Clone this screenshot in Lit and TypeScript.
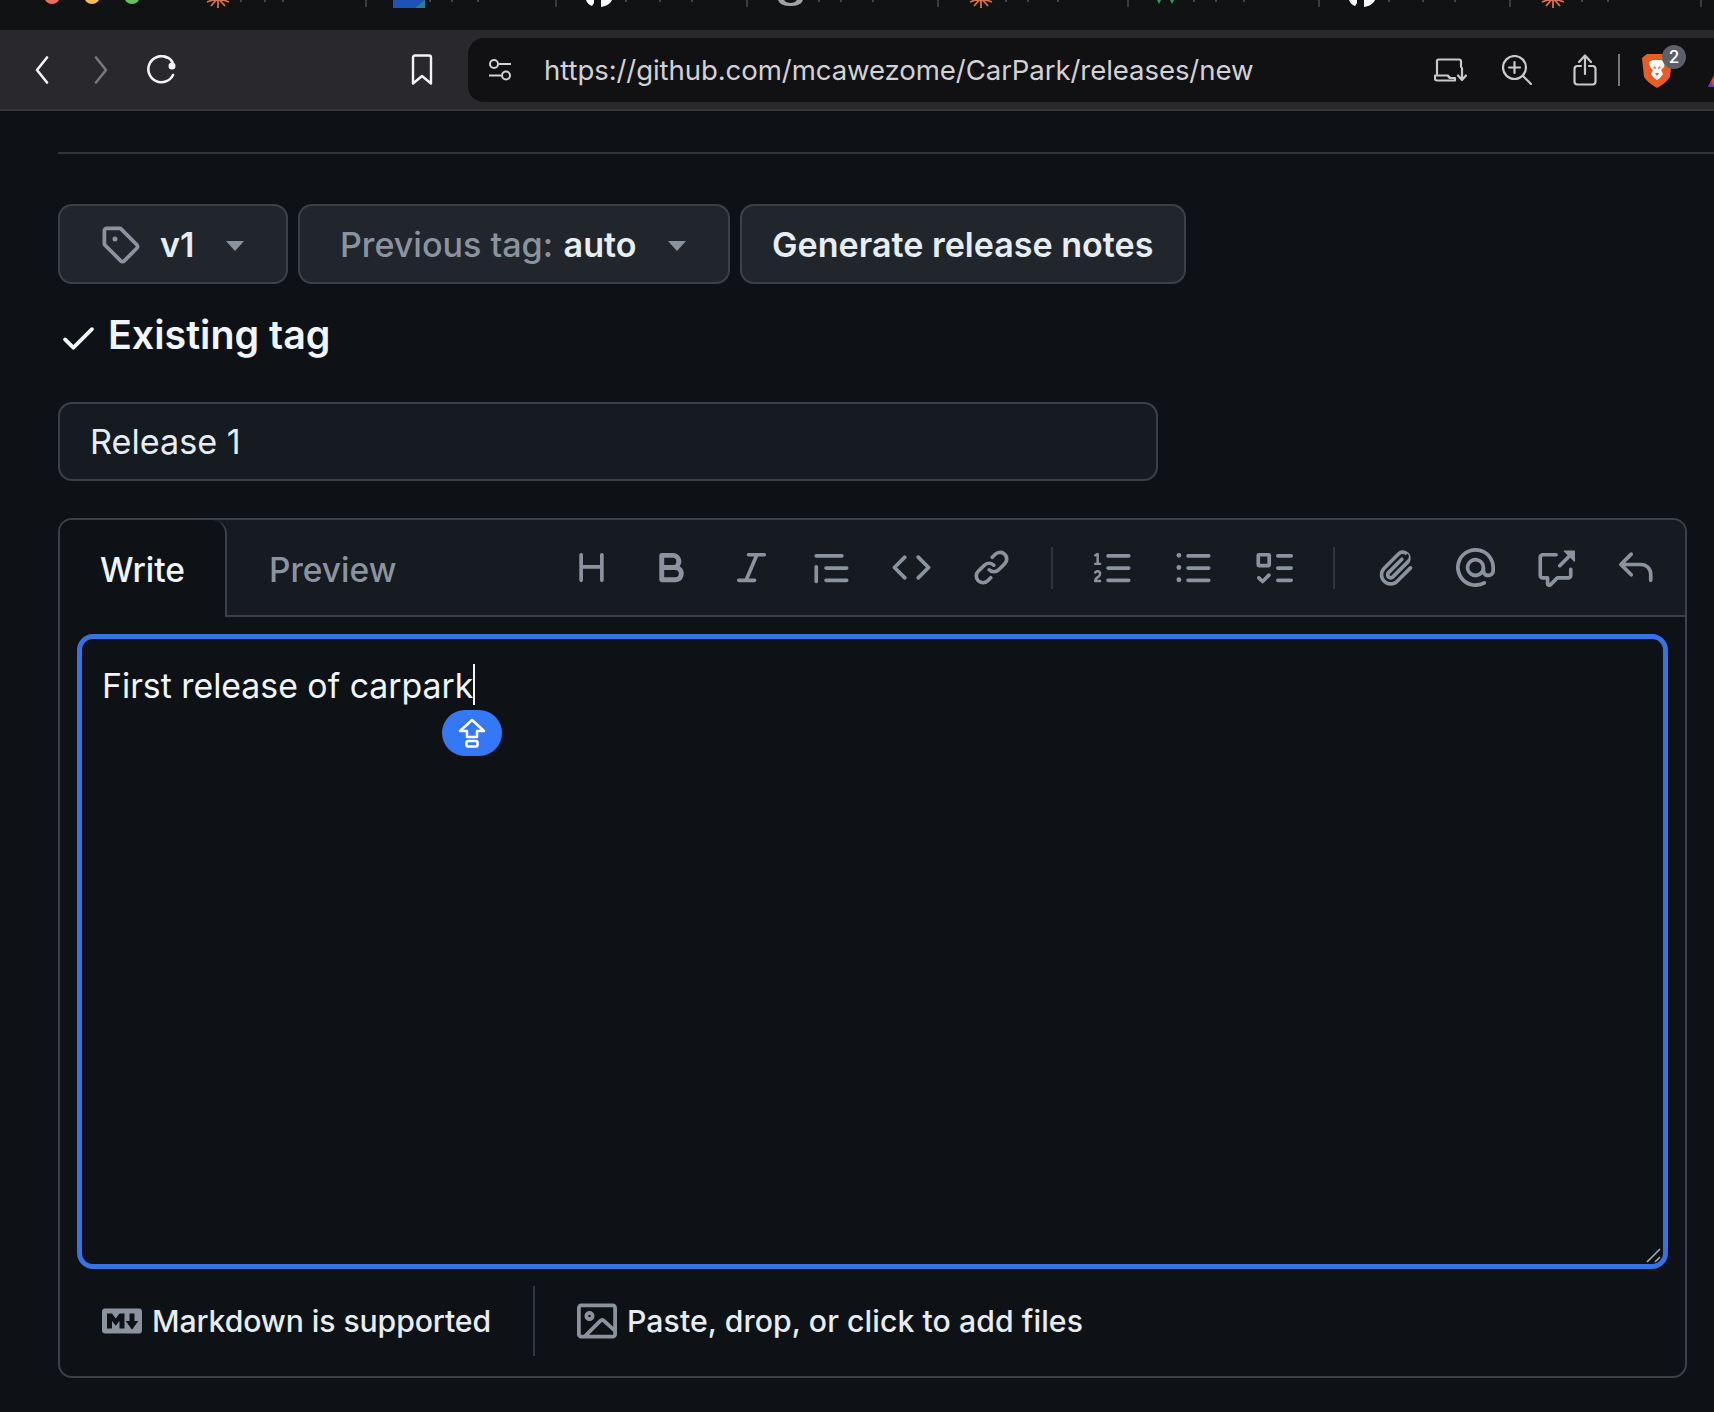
import {html, css, svg, LitElement} from 'lit';
import {customElement} from 'lit/decorators.js';

// octicons, 16 unit grid
const ICONS: Record<string, string> = {
    heading: "M3.75 2a.75.75 0 0 1 .75.75V7h7V2.75a.75.75 0 0 1 1.5 0v10.5a.75.75 0 0 1-1.5 0V8.5h-7v4.75a.75.75 0 0 1-1.5 0V2.75A.75.75 0 0 1 3.75 2Z",
    bold: "M4 2h4.5a3.501 3.501 0 0 1 2.852 5.53A3.499 3.499 0 0 1 9.5 14H4a1 1 0 0 1-1-1V3a1 1 0 0 1 1-1Zm1 7v3h4.5a1.5 1.5 0 0 0 0-3Zm3.5-2a1.5 1.5 0 0 0 0-3H5v3Z",
    italic: "M6 2.75A.75.75 0 0 1 6.75 2h6.5a.75.75 0 0 1 0 1.5h-2.505l-3.858 9H9.25a.75.75 0 0 1 0 1.5h-6.5a.75.75 0 0 1 0-1.5h2.505l3.858-9H6.75A.75.75 0 0 1 6 2.75Z",
    quote: "M1.75 2.5h10.5a.75.75 0 0 1 0 1.5H1.75a.75.75 0 0 1 0-1.5Zm4 5h8.5a.75.75 0 0 1 0 1.5h-8.5a.75.75 0 0 1 0-1.5Zm0 5h8.5a.75.75 0 0 1 0 1.5h-8.5a.75.75 0 0 1 0-1.5ZM2.5 7.75v6a.75.75 0 0 1-1.5 0v-6a.75.75 0 0 1 1.5 0Z",
    code: "m11.28 3.22 4.25 4.25a.75.75 0 0 1 0 1.06l-4.25 4.25a.749.749 0 0 1-1.275-.326.749.749 0 0 1 .215-.734L13.94 8l-3.72-3.72a.749.749 0 0 1 .326-1.275.749.749 0 0 1 .734.215Zm-6.56 0a.751.751 0 0 1 1.042.018.751.751 0 0 1 .018 1.042L2.06 8l3.72 3.72a.749.749 0 0 1-.326 1.275.749.749 0 0 1-.734-.215L.47 8.53a.75.75 0 0 1 0-1.06Z",
    link: "m7.775 3.275 1.25-1.25a3.5 3.5 0 1 1 4.95 4.95l-2.5 2.5a3.5 3.5 0 0 1-4.95 0 .751.751 0 0 1 .018-1.042.751.751 0 0 1 1.042-.018 1.998 1.998 0 0 0 2.83 0l2.5-2.5a2.002 2.002 0 0 0-2.83-2.83l-1.25 1.25a.751.751 0 0 1-1.042-.018.751.751 0 0 1-.018-1.042Zm-4.69 9.64a1.998 1.998 0 0 0 2.83 0l1.25-1.25a.751.751 0 0 1 1.042.018.751.751 0 0 1 .018 1.042l-1.25 1.25a3.5 3.5 0 1 1-4.95-4.95l2.5-2.5a3.5 3.5 0 0 1 4.95 0 .751.751 0 0 1-.018 1.042.751.751 0 0 1-1.042.018 1.998 1.998 0 0 0-2.83 0l-2.5 2.5a1.998 1.998 0 0 0 0 2.83Z",
    ordered: "M5 3.25a.75.75 0 0 1 .75-.75h8.5a.75.75 0 0 1 0 1.5h-8.5A.75.75 0 0 1 5 3.25Zm0 5a.75.75 0 0 1 .75-.75h8.5a.75.75 0 0 1 0 1.5h-8.5A.75.75 0 0 1 5 8.25Zm0 5a.75.75 0 0 1 .75-.75h8.5a.75.75 0 0 1 0 1.5h-8.5a.75.75 0 0 1-.75-.75ZM.924 10.32a.5.5 0 0 1-.851-.525l.001-.001.001-.002.002-.004.007-.011c.097-.144.215-.273.348-.384.228-.19.588-.392 1.068-.392.468 0 .858.181 1.126.484.259.294.377.673.377 1.038 0 .987-.686 1.495-1.156 1.845l-.047.035c-.303.225-.522.4-.654.597h1.357a.5.5 0 0 1 0 1H.5a.5.5 0 0 1-.5-.5c0-1.005.692-1.52 1.167-1.875l.035-.025c.531-.396.8-.625.8-1.078a.57.57 0 0 0-.128-.376C1.806 10.068 1.695 10 1.5 10a.658.658 0 0 0-.429.163.835.835 0 0 0-.144.153ZM2.003 2.5V6h.503a.5.5 0 0 1 0 1H.5a.5.5 0 0 1 0-1h.503V3.308l-.28.14a.5.5 0 0 1-.446-.895l1.003-.5a.5.5 0 0 1 .723.447Z",
    unordered: "M5.75 2.5h8.5a.75.75 0 0 1 0 1.5h-8.5a.75.75 0 0 1 0-1.5Zm0 5h8.5a.75.75 0 0 1 0 1.5h-8.5a.75.75 0 0 1 0-1.5Zm0 5h8.5a.75.75 0 0 1 0 1.5h-8.5a.75.75 0 0 1 0-1.5ZM2 14a1 1 0 1 1 0-2 1 1 0 0 1 0 2Zm1-6a1 1 0 1 1-2 0 1 1 0 0 1 2 0ZM2 4a1 1 0 1 1 0-2 1 1 0 0 1 0 2Z",
    tasklist: "M2 2h4a1 1 0 0 1 1 1v4a1 1 0 0 1-1 1H2a1 1 0 0 1-1-1V3a1 1 0 0 1 1-1Zm4.655 8.595a.75.75 0 0 1 0 1.06L4.03 14.28a.75.75 0 0 1-1.06 0l-1.5-1.5a.749.749 0 0 1 .326-1.275.749.749 0 0 1 .734.215l.97.97 2.095-2.095a.75.75 0 0 1 1.06 0ZM9.75 2.5h5.5a.75.75 0 0 1 0 1.5h-5.5a.75.75 0 0 1 0-1.5Zm0 5h5.5a.75.75 0 0 1 0 1.5h-5.5a.75.75 0 0 1 0-1.5Zm0 5h5.5a.75.75 0 0 1 0 1.5h-5.5a.75.75 0 0 1 0-1.5Zm-7.25-9v3h3v-3Z",
    paperclip: "M12.212 3.02a1.753 1.753 0 0 0-2.478.003l-5.83 5.83a3.007 3.007 0 0 0-.88 2.127c0 .795.315 1.551.88 2.116.567.567 1.333.89 2.13.89.79 0 1.548-.321 2.116-.89l5.48-5.48a.75.75 0 0 1 1.061 1.06l-5.48 5.48a4.492 4.492 0 0 1-3.177 1.33c-1.2 0-2.345-.487-3.187-1.33a4.483 4.483 0 0 1-1.32-3.177c0-1.195.475-2.341 1.32-3.186l5.83-5.83a3.25 3.25 0 0 1 5.553 2.297c0 .863-.343 1.691-.953 2.301L7.439 12.39c-.375.377-.884.59-1.416.593a1.998 1.998 0 0 1-1.412-.593 1.992 1.992 0 0 1 0-2.828l5.48-5.48a.751.751 0 0 1 1.042.018.751.751 0 0 1 .018 1.042l-5.48 5.48a.492.492 0 0 0 0 .707.499.499 0 0 0 .707 0l6.58-6.58a1.752 1.752 0 0 0 0-2.479Z",
    mention: "M4.75 2.37a6.501 6.501 0 0 0 6.5 11.26.75.75 0 0 1 .75 1.298A7.999 7.999 0 0 1 .989 4.148 8 8 0 0 1 16 7.75v1.5a2.75 2.75 0 0 1-5.072 1.475 3.999 3.999 0 0 1-6.65-4.19A4 4 0 0 1 12 8v1.25a1.25 1.25 0 0 0 2.5 0v-1.5a6.5 6.5 0 0 0-9.75-5.38ZM10.5 8a2.5 2.5 0 1 0-5 0 2.5 2.5 0 0 0 5 0Z",
    crossref: "M2.75 3.5a.25.25 0 0 0-.25.25v7.5c0 .138.112.25.25.25h2a.75.75 0 0 1 .75.75v2.19l2.72-2.72a.749.749 0 0 1 .53-.22h4.5a.25.25 0 0 0 .25-.25v-2.5a.75.75 0 0 1 1.5 0v2.5A1.75 1.75 0 0 1 13.25 13H9.06l-2.573 2.573A1.458 1.458 0 0 1 4 14.543V13H2.75A1.75 1.75 0 0 1 1 11.25v-7.5C1 2.784 1.784 2 2.75 2h5.5a.75.75 0 0 1 0 1.5ZM16 1.25v4.146a.25.25 0 0 1-.427.177L14.03 4.03l-3.75 3.75a.749.749 0 0 1-1.275-.326.749.749 0 0 1 .215-.734l3.75-3.75-1.543-1.543A.25.25 0 0 1 11.604 1h4.146a.25.25 0 0 1 .25.25Z",
    reply: "M6.78 1.97a.75.75 0 0 1 0 1.06L3.81 6h6.44A4.75 4.75 0 0 1 15 10.75v2.5a.75.75 0 0 1-1.5 0v-2.5a3.25 3.25 0 0 0-3.25-3.25H3.81l2.97 2.97a.749.749 0 0 1-.326 1.275.749.749 0 0 1-.734-.215L1.47 7.28a.75.75 0 0 1 0-1.06l4.25-4.25a.75.75 0 0 1 1.06 0Z",
    tag: "M1 7.775V2.75C1 1.784 1.784 1 2.75 1h5.025c.464 0 .91.184 1.238.513l6.25 6.25a1.75 1.75 0 0 1 0 2.474l-5.026 5.026a1.75 1.75 0 0 1-2.474 0l-6.25-6.25A1.752 1.752 0 0 1 1 7.775Zm1.5 0c0 .066.026.13.073.177l6.25 6.25a.25.25 0 0 0 .354 0l5.025-5.025a.25.25 0 0 0 0-.354l-6.25-6.25a.25.25 0 0 0-.177-.073H2.75a.25.25 0 0 0-.25.25ZM6 5a1 1 0 1 1 0 2 1 1 0 0 1 0-2Z",
    markdown: "M14.85 3c.63 0 1.15.52 1.14 1.15v7.7c0 .63-.51 1.15-1.15 1.15H1.15C.52 13 0 12.48 0 11.84V4.15C0 3.52.52 3 1.15 3ZM9 11V5H7L5.5 7 4 5H2v6h2V8l1.5 1.92L7 8v3Zm2.99.5L14.5 8H13V5h-2v3H9.5Z",
    image: "M16 13.25A1.75 1.75 0 0 1 14.25 15H1.75A1.75 1.75 0 0 1 0 13.25V2.75C0 1.784.784 1 1.75 1h12.5c.966 0 1.75.784 1.75 1.75ZM1.75 2.5a.25.25 0 0 0-.25.25v10.5c0 .138.112.25.25.25h.94l.03-.03 6.077-6.078a1.75 1.75 0 0 1 2.412-.06L14.5 10.31V2.75a.25.25 0 0 0-.25-.25Zm12.5 11a.25.25 0 0 0 .25-.25v-.917l-4.298-3.889a.25.25 0 0 0-.344.009L4.81 13.5ZM7 6a2 2 0 1 1-3.999.001A2 2 0 0 1 7 6ZM5.5 6a.5.5 0 1 0-1 0 .5.5 0 0 0 1 0Z",
    check: "M13.78 4.22a.75.75 0 0 1 0 1.06l-7.25 7.25a.75.75 0 0 1-1.06 0L2.22 9.28a.751.751 0 0 1 .018-1.042.751.751 0 0 1 1.042-.018L6 10.94l6.72-6.72a.75.75 0 0 1 1.06 0Z",
};

const octicon = (name: string, size: number) => html`<svg class="oct" width=${size} height=${size} viewBox="0 0 16 16" fill="currentColor"><path d=${ICONS[name]}></path></svg>`;

const sun = svg`<g stroke="#d9704a" stroke-width="1.8" fill="none"><path d="M16 -2V8M16 -2L9 6M16 -2L23 6M16 -2L5 2M16 -2L27 2"/></g>`;
const octo = svg`<path d="M3 0C4 3 6 5 9 6L11 3 11 0ZM18 0V7C24 6 28 3 29 0Z" fill="#fff"/>`;
const favicons = [
    sun,
    svg`<rect x="0" width="32" height="8" fill="#2051b4"/><path d="M22 8 32 0V8Z" fill="#2a7f8f"/>`,
    octo,
    svg`<path d="M4 0Q6 6 16.500 6Q27 6 29 0H23Q21 3 16.500 3Q12 3 10 0Z" fill="#a3a3a6"/>`,
    sun,
    svg`<path d="M2 0 4 4 6 0ZM15 0 17 4 19 0Z" fill="#2f9e57"/>`,
    octo,
    sun,
];
// crumbs of the tab titles that still show above the fold
const titleMarks = [
    [38, 62, 80],
    [36, 58, 84],
    [42, 76, 108],
    [44, 66, 98],
    [40, 62, 92],
    [38, 60, 88],
    [42, 76, 108],
    [44, 70],
];

@customElement('app-root')
export class AppRoot extends LitElement {
    static styles = css`
        :host {
            display: block;
            width: 1714px;
            height: 1412px;
            overflow: hidden;
            background: #0e1216;
            font-family: Inter, "Liberation Sans", sans-serif;
            color: #e6edf3;
        }
        .oct { display: block; flex: none; }

        .tabstrip {
            height: 30px;
            background: #111214;
            display: flex;
            padding-left: 176px;
            overflow: hidden;
            position: relative;
        }
        .lights { position: absolute; left: 0; top: 0; display: flex; gap: 24px; padding-left: 44px; }
        .lights i { display: block; width: 16px; height: 16px; border-radius: 50%; margin-top: -12px; }
        .tab {
            width: 190.7px;
            height: 8px;
            flex: none;
            position: relative;
        }
        .tab svg { display: block; }
        .tab::after {
            content: "";
            position: absolute;
            right: 0;
            top: 0;
            width: 2px;
            height: 7px;
            background: #3a3b3f;
        }

        .toolbar {
            height: 81px;
            box-sizing: border-box;
            background: #28282d;
            border-bottom: 2px solid #36363b;
            display: flex;
            color: #f1f1f3;
        }
        .nav {
            width: 468px;
            flex: none;
            display: flex;
            align-items: center;
            padding-left: 35px;
            box-sizing: border-box;
        }
        .address {
            flex: 1;
            margin-top: 8px;
            height: 64px;
            background: #111113;
            border-radius: 16px 0 0 16px;
            display: flex;
            align-items: center;
            padding-left: 20px;
            overflow: hidden;
        }
        .address > svg { flex: none; }
        .url {
            font-size: 27.6px;
            color: #d2d2d6;
            margin-left: 32px;
            letter-spacing: -0.1px;
            white-space: nowrap;
            width: 890px;
            flex: none;
        }
        .tools { display: flex; align-items: center; color: #c9c9cc; flex: none; }
        .tools svg { flex: none; }
        .vline { width: 2px; height: 32px; background: #77777b; }
        .shield { position: relative; width: 30px; height: 35px; }
        .badge {
            position: absolute;
            left: 20px;
            top: -8px;
            width: 24px;
            height: 24px;
            border-radius: 50%;
            background: #5d5f6b;
            color: #fff;
            font-size: 17px;
            font-weight: 500;
            display: flex;
            align-items: center;
            justify-content: center;
        }

        main { padding: 41px 27px 0 58px; }
        hr { border: 0; height: 2px; background: #30363d; margin: 0 -27px 50px 0; }

        .actions { display: flex; gap: 10px; }
        .btn {
            height: 80px;
            box-sizing: border-box;
            background: #21262d;
            border: 2px solid #3c4148;
            border-radius: 14px;
            display: flex;
            align-items: center;
            font-size: 34.1px;
            font-weight: 600;
            color: #e6edf3;
            white-space: nowrap;
        }
        .btn .dim { color: #8b949e; font-weight: 500; margin-right: 2px; }
        .caret {
            width: 0;
            height: 0;
            border-left: 9.5px solid transparent;
            border-right: 9.5px solid transparent;
            border-top: 10px solid #8b949e;
            margin-top: 3px;
        }
        .tagbtn { width: 230px; padding-left: 40px; }
        .tagbtn .oct { color: #8b949e; }
        .tagbtn span { margin: 0 32px 0 20px; }
        .prevbtn { width: 432px; padding-left: 40px; }
        .prevbtn span { margin-right: 31px; }
        .genbtn { width: 446px; padding-left: 30px; }

        .status {
            display: flex;
            align-items: center;
            height: 53px;
            margin-top: 24px;
            font-size: 39.4px;
            font-weight: 600;
            color: #f0f6fc;
        }
        .status .oct { margin: 5px 9px 0 0; }

        .title {
            width: 1100px;
            height: 79px;
            box-sizing: border-box;
            margin-top: 41px;
            background: #161b22;
            border: 2px solid #3c4148;
            border-radius: 14px;
            padding-left: 30px;
            display: flex;
            align-items: center;
            font-size: 34.2px;
        }

        .editor {
            margin-top: 37px;
            height: 860px;
            box-sizing: border-box;
            border: 2px solid #3c4148;
            border-radius: 14px;
            overflow: hidden;
        }
        .head {
            height: 95px;
            background: #161b22;
            border-bottom: 2px solid #3c4148;
            display: flex;
        }
        .write {
            width: 167px;
            height: 97px;
            box-sizing: border-box;
            background: #0e1216;
            border-right: 2px solid #3c4148;
            border-top-right-radius: 14px;
            font-size: 33.5px;
            font-weight: 500;
            padding: 30px 0 0 40px;
            color: #f0f6fc;
            flex: none;
        }
        .preview {
            font-size: 33.5px;
            font-weight: 500;
            color: #8b949e;
            padding: 30px 0 0 42px;
            width: 339px;
            flex: none;
            box-sizing: border-box;
        }
        .icons {
            display: flex;
            align-items: center;
            gap: 41px;
            color: #8b949e;
            height: 95px;
            padding-left: 6px;
        }
        .sep { width: 2px; height: 42px; background: #30363d; margin: 0 0 0 -1px; }

        .body { padding: 17px 17px 0 17px; }
        .field {
            position: relative;
            height: 635px;
            box-sizing: border-box;
            border: 5px solid #3572e3;
            border-radius: 16px;
            padding: 22px 0 0 20px;
            font-size: 33.8px;
            color: #f0f6fc;
            line-height: 48px;
        }
        .typed { display: inline-block; border-right: 2px solid #f0f6fc; height: 41px; line-height: 44px; margin-top: 3px; }
        .shift {
            position: absolute;
            left: 360px;
            top: 71px;
            width: 60px;
            height: 46px;
            border-radius: 23px;
            background: #3578f6;
            display: flex;
            align-items: center;
            justify-content: center;
        }
        .grip { position: absolute; right: 1px; bottom: 1px; display: block; }

        .foot {
            display: flex;
            align-items: center;
            height: 70px;
            margin-top: 17px;
            padding-left: 25px;
            font-size: 30.2px;
            font-weight: 500;
            color: #e6edf3;
        }
        .foot .oct { color: #8b949e; margin-right: 10px; }
        .foot .rule { width: 2px; height: 70px; background: #30363d; margin: 0 42px 0 42px; }
        .md { letter-spacing: -0.1px; }
        .paste { letter-spacing: 0.08px; }
    `;

    renderTab(i: number) {
        return html`<div class="tab">
            <svg width="190" height="8" viewBox="0 0 190 8">
                <g transform="translate(26 0)">${favicons[i]}</g>
                ${titleMarks[i].map(x => svg`<rect x=${x + 26} y="0" width="2" height="2" fill="#45464a"/>`)}
            </svg>
        </div>`;
    }

    render() {
        return html`
            <div class="tabstrip">
                <div class="lights">
                    <i style="background:#ee6a5f"></i><i style="background:#f5bd4f"></i><i style="background:#61c454"></i>
                </div>
                ${titleMarks.map((_, i) => this.renderTab(i))}
            </div>
            <div class="toolbar">
                <div class="nav">
                    <svg width="14" height="28" viewBox="0 0 14 28" fill="none" stroke="#f4f4f6" stroke-width="2.6" stroke-linecap="round" stroke-linejoin="round"><path d="M12 1.5 2 14l10 12.500"/></svg>
                    <svg style="margin-left:45px" width="14" height="28" viewBox="0 0 14 28" fill="none" stroke="#77777c" stroke-width="2.6" stroke-linecap="round" stroke-linejoin="round"><path d="M2 1.500 12 14 2 26.500"/></svg>
                    <svg style="margin-left:38px" width="32" height="30" viewBox="0 0 32 30" fill="none" stroke="#f4f4f6" stroke-width="2.6" stroke-linecap="round"><path d="M21 2.500A13 13 0 1 0 27 20"/><circle cx="26" cy="11" r="3.500" fill="#f4f4f6" stroke="none"/><path d="M19 1.800C23 2.500 26 5.500 27 9"/></svg>
                    <svg style="margin-left:232px" width="24" height="32" viewBox="0 0 24 32" fill="none" stroke="#f4f4f6" stroke-width="2.400" stroke-linejoin="round"><path d="M3 3.500Q3 1.500 5 1.500H19Q21 1.500 21 3.500V29.500L12 22 3 29.500Z"/></svg>
                </div>
                <div class="address">
                    <svg width="24" height="24" viewBox="0 0 24 24" fill="none" stroke="#d2d2d6" stroke-width="2"><circle cx="6" cy="6" r="4"/><path d="M11 6H23M1 17.500H13"/><circle cx="18" cy="17.500" r="4"/></svg>
                    <div class="url">https://github.com/mcawezome/CarPark/releases/new</div>
                    <div class="tools">
                        <svg width="34" height="24" viewBox="0 0 34 24" fill="none" stroke="#c9c9cc" stroke-width="2.200" stroke-linecap="round" stroke-linejoin="round"><path d="M3 16V3Q3 1.500 4.500 1.500H25Q27 1.500 27 3.500V9"/><path d="M1 17.500H14Q15 20 17 20H21V22.500H3Q1 22.500 1 20.500Z"/><path d="M28 10V21M24 17.500 28 22 32 17.500"/></svg>
                        <svg style="margin-left:34px" width="30" height="30" viewBox="0 0 30 30" fill="none" stroke="#c9c9cc" stroke-width="2.200" stroke-linecap="round"><circle cx="12.500" cy="12.500" r="11.500"/><path d="M12.500 7V18M7 12.500H18M21 21 29 29"/></svg>
                        <svg style="margin-left:41px" width="24" height="32" viewBox="0 0 24 32" fill="none" stroke="#c9c9cc" stroke-width="2.200" stroke-linecap="round" stroke-linejoin="round"><path d="M12 2V20M6 8 12 1.500 18 8"/><path d="M8 12H4.500Q1.500 12 1.500 15V27.500Q1.500 30.500 4.500 30.500H19.500Q22.500 30.500 22.500 27.500V15Q22.500 12 19.500 12H16"/></svg>
                        <div class="vline" style="margin-left:21px"></div>
                        <div class="shield" style="margin-left:22px">
                            <svg width="30" height="35" viewBox="0 0 30 35"><path d="M5 1H25L30 5 28 24Q24 30 15 35 6 30 2 24L0 5Z" fill="#ea5c26"/><path d="M7 9 11 7H19L23 9 22 14 19 17 21 21 18 25 15 27 12 25 9 21 11 17 8 14Z" fill="#fff"/><path d="M11 15 14 16 13 13ZM19 15 16 16 17 13ZM13 20H17L15 23Z" fill="#ea5c26"/></svg>
                            <div class="badge">2</div>
                        </div>
                        <svg style="margin:20px 0 0 36px" width="14" height="14" viewBox="0 0 14 14"><path d="M7 0 0 14H14Z" fill="#e2432c"/><path d="M3 8 0 14H6Z" fill="#6a3aa8"/></svg>
                    </div>
                </div>
            </div>
            <main>
                <hr />
                <div class="actions">
                    <div class="btn tagbtn">${octicon('tag', 40)}<span>v1</span><i class="caret"></i></div>
                    <div class="btn prevbtn"><span><b class="dim">Previous tag:</b> auto</span><i class="caret"></i></div>
                    <div class="btn genbtn">Generate release notes</div>
                </div>
                <div class="status">${octicon('check', 41)}Existing tag</div>
                <div class="title">Release 1</div>
                <div class="editor">
                    <div class="head">
                        <div class="write">Write</div>
                        <div class="preview">Preview</div>
                        <div class="icons">
                            ${['heading', 'bold', 'italic', 'quote', 'code', 'link'].map(n => octicon(n, 39))}
                            <div class="sep"></div>
                            ${['ordered', 'unordered', 'tasklist'].map(n => octicon(n, 39))}
                            <div class="sep"></div>
                            ${['paperclip', 'mention', 'crossref', 'reply'].map(n => octicon(n, 39))}
                        </div>
                    </div>
                    <div class="body">
                        <div class="field">
                            <span class="typed">First release of carpark</span>
                            <div class="shift">
                                <svg width="30" height="30" viewBox="0 0 30 30" fill="none" stroke="#fff" stroke-width="2.600" stroke-linejoin="round"><path d="M15 2 27 13H20V19H10V13H3Z"/><rect x="9.500" y="23" width="11" height="5.500" rx="1.500"/></svg>
                            </div>
                            <svg class="grip" width="16" height="16" viewBox="0 0 16 16" stroke="#a8a8a8" stroke-width="1.600"><path d="M1 15 14 2M9 15 14 10"/></svg>
                        </div>
                        <div class="foot">
                            ${octicon('markdown', 40)}<span class="md">Markdown is supported</span>
                            <div class="rule"></div>
                            ${octicon('image', 40)}<span class="paste">Paste, drop, or click to add files</span>
                        </div>
                    </div>
                </div>
            </main>
        `;
    }
}
